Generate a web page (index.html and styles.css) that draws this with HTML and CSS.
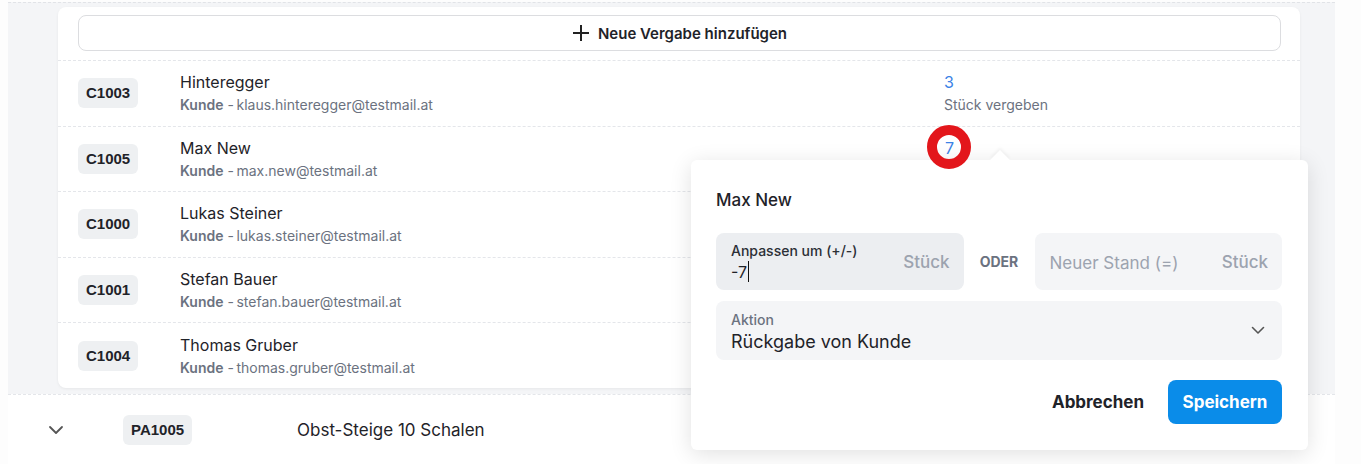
FILE: index.html
```html
<!DOCTYPE html>
<html lang="de">
<head>
    <meta charset="UTF-8">
    <meta name="viewport" content="width=device-width, initial-scale=1.0">
    <title>Vergaben</title>
    <link rel="stylesheet" href="styles.css">
</head>
<body>
    <div class="wrap">
        <!-- aufgeklappte Zeile mit Vergaben -->
        <div class="expanded">
            <div class="card">
                <button class="add-btn">
                    <svg width="18" height="18" viewBox="0 0 18 18"><path d="M9 1v16M1 9h16" stroke="#222" stroke-width="2" fill="none"/></svg>
                    Neue Vergabe hinzufügen
                </button>

                <div class="row">
                    <div><span class="badge">C1003</span></div>
                    <div class="who">
                        <div class="name">Hinteregger</div>
                        <div class="sub"><b>Kunde</b> -&thinsp;klaus.hinteregger@testmail.at</div>
                    </div>
                    <div class="qty">
                        <div class="num">3</div>
                        <div class="sub">Stück vergeben</div>
                    </div>
                </div>
                <div class="row">
                    <div><span class="badge">C1005</span></div>
                    <div class="who">
                        <div class="name">Max New</div>
                        <div class="sub"><b>Kunde</b> -&thinsp;max.new@testmail.at</div>
                    </div>
                    <div class="qty">
                        <div class="num num-active">7<span class="ring"></span></div>
                        <div class="sub">Stück vergeben</div>
                    </div>
                </div>
                <div class="row">
                    <div><span class="badge">C1000</span></div>
                    <div class="who">
                        <div class="name">Lukas Steiner</div>
                        <div class="sub"><b>Kunde</b> -&thinsp;lukas.steiner@testmail.at</div>
                    </div>
                    <div class="qty"></div>
                </div>
                <div class="row">
                    <div><span class="badge">C1001</span></div>
                    <div class="who">
                        <div class="name">Stefan Bauer</div>
                        <div class="sub"><b>Kunde</b> -&thinsp;stefan.bauer@testmail.at</div>
                    </div>
                    <div class="qty"></div>
                </div>
                <div class="row">
                    <div><span class="badge">C1004</span></div>
                    <div class="who">
                        <div class="name">Thomas Gruber</div>
                        <div class="sub"><b>Kunde</b> -&thinsp;thomas.gruber@testmail.at</div>
                    </div>
                    <div class="qty"></div>
                </div>
            </div>
        </div>

        <!-- nächste Artikelzeile -->
        <div class="item-row">
            <svg class="chev" width="16" height="10" viewBox="0 0 16 10"><path d="M2 2l6 6 6-6" stroke="#555" stroke-width="1.8" fill="none" stroke-linecap="round" stroke-linejoin="round"/></svg>
            <div><span class="badge">PA1005</span></div>
            <div class="item-name">Obst-Steige 10 Schalen</div>
        </div>

        <!-- Popover zum Anpassen -->
        <div class="popover">
            <div class="arrow"></div>
            <div class="pop-title">Max New</div>
            <div class="fields">
                <div class="field focused">
                    <div class="field-main">
                        <label>Anpassen um (+/-)</label>
                        <div class="value">-7<span class="caret"></span></div>
                    </div>
                    <span class="unit">Stück</span>
                </div>
                <div class="oder">ODER</div>
                <div class="field">
                    <div class="field-main">
                        <div class="placeholder">Neuer Stand (=)</div>
                    </div>
                    <span class="unit">Stück</span>
                </div>
            </div>
            <div class="select">
                <div class="field-main">
                    <label class="muted">Aktion</label>
                    <div class="value big">Rückgabe von Kunde</div>
                </div>
                <svg width="14" height="9" viewBox="0 0 14 9"><path d="M1.5 1.5l5.5 5.5 5.5-5.5" stroke="#555" stroke-width="1.6" fill="none" stroke-linecap="round" stroke-linejoin="round"/></svg>
            </div>
            <div class="actions">
                <button class="btn-text">Abbrechen</button>
                <button class="btn-primary">Speichern</button>
            </div>
        </div>
    </div>
</body>
</html>
```

FILE: styles.css
```css
body {
    margin: 0;
    font-family: Inter, "Noto Sans", sans-serif;
    color: #1f2329;
    background: #fdfdfd;
    overflow: hidden;
}
.wrap {
    position: relative;
    width: 1327px;
    margin-left: 8px;
    padding-top: 2px;
}
.expanded {
    background: #f4f5f7;
    border-top: 1px dashed #e1e3e7;
    padding: 4px 35px 6px 50px;
}
.card {
    background: #fff;
    border-radius: 8px;
    box-shadow: 0 1px 3px rgba(0, 0, 0, 0.06);
    padding-top: 8px;
}
.add-btn {
    display: flex;
    align-items: center;
    justify-content: center;
    gap: 8px;
    width: calc(100% - 39px);
    height: 36px;
    margin: 0 19px 9px 20px;
    background: #fff;
    border: 1px solid #dcdde0;
    border-radius: 8px;
    font-family: inherit;
    font-size: 15px;
    font-weight: 600;
    color: #1f2329;
    cursor: pointer;
}
.row {
    box-sizing: border-box;
    height: 65.6px;
    display: grid;
    grid-template-columns: 102px 764px 1fr;
    align-items: center;
    padding-left: 20px;
    border-top: 1px dashed #e4e6ea;
}
.badge {
    display: inline-block;
    padding: 6px 8px;
    background: #eef0f2;
    border-radius: 6px;
    font-family: "Liberation Sans", Arial, sans-serif;
    font-weight: bold;
    font-size: 15px;
    line-height: 18px;
    color: #1f2329;
}
.name {
    font-size: 16px;
    line-height: 22px;
}
.sub {
    margin-top: 2px;
    font-size: 14px;
    line-height: 20px;
    color: #6b7280;
}
.sub b {
    font-weight: 600;
}
.num {
    font-size: 16px;
    line-height: 22px;
    color: #3b82e6;
}
.num-active {
    position: relative;
    display: inline-block;
    padding-left: 1px;
}
.ring {
    position: absolute;
    left: -17px;
    top: -12px;
    width: 24px;
    height: 24px;
    border: 10px solid #e3161b;
    border-radius: 50%;
    z-index: 5;
}
.item-row {
    display: grid;
    grid-template-columns: 75px 174px 1fr;
    align-items: center;
    height: 70px;
    padding-left: 40px;
    background: #fff;
    border-top: 1px dashed #e4e6ea;
}
.item-name {
    font-size: 17px;
}

/* Popover */
.popover {
    position: absolute;
    left: 683px;
    top: 160px;
    width: 617px;
    box-sizing: border-box;
    padding: 28px 26px 26px 25px;
    background: #fff;
    border-radius: 6px;
    box-shadow: 0 4px 22px rgba(0, 0, 0, 0.12);
    z-index: 3;
}
.arrow {
    position: absolute;
    left: 302px;
    top: -7px;
    width: 14px;
    height: 14px;
    background: #fff;
    transform: rotate(45deg);
    box-shadow: -2px -2px 3px rgba(0, 0, 0, 0.04);
}
.pop-title {
    font-size: 17px;
    font-weight: 500;
    line-height: 24px;
    margin-bottom: 21px;
}
.fields {
    display: flex;
    align-items: center;
}
.field {
    flex: 1;
    display: flex;
    align-items: center;
    height: 57px;
    padding: 0 14px 0 15px;
    background: #f4f5f7;
    border-radius: 8px;
}
.field.focused {
    background: #eceef1;
}
.field-main {
    flex: 1;
}
.field .field-main {
    padding-top: 3px;
}
.select .field-main {
    padding-top: 4px;
}
.oder {
    width: 71px;
    text-align: center;
    font-size: 14px;
    font-weight: 700;
    color: #6b7280;
}
label {
    display: block;
    font-size: 14px;
    font-weight: 500;
    line-height: 18px;
    color: #2b2f36;
}
label.muted {
    color: #6b7280;
}
.value {
    font-size: 16px;
    line-height: 24px;
}
.value.big {
    font-size: 18px;
    line-height: 26px;
}
.caret {
    display: inline-block;
    width: 1px;
    height: 21px;
    margin-left: 1px;
    vertical-align: -4px;
    background: #111;
}
.placeholder {
    font-size: 17px;
    color: #9ca3af;
}
.unit {
    font-size: 17px;
    font-weight: 500;
    color: #9ca3af;
}
.select {
    display: flex;
    align-items: center;
    height: 59px;
    margin-top: 11px;
    padding: 0 17px 0 15px;
    background: #f4f5f7;
    border-radius: 8px;
}
.actions {
    display: flex;
    justify-content: flex-end;
    align-items: center;
    gap: 18px;
    margin-top: 20px;
}
.btn-text {
    background: none;
    border: none;
    font-family: inherit;
    font-size: 17px;
    font-weight: 700;
    color: #1f2329;
    cursor: pointer;
}
.btn-primary {
    width: 114px;
    height: 44px;
    background: #0a8ce9;
    border: none;
    border-radius: 8px;
    font-family: inherit;
    font-size: 17px;
    font-weight: 700;
    color: #fff;
    cursor: pointer;
}
```
